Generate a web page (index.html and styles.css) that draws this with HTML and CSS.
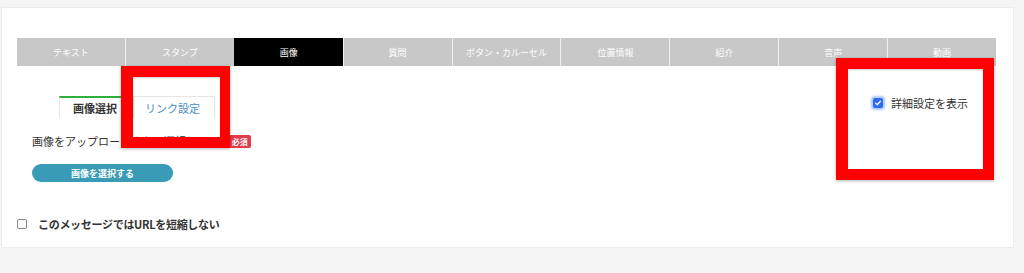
FILE: index.html
```html
<!DOCTYPE html>
<html lang="ja">
<head>
<meta charset="utf-8">
<link rel="stylesheet" href="styles.css">
</head>
<body>
<div class="card">
  <div class="tabs">
    <div class="tab">テキスト</div>
    <div class="tab">スタンプ</div>
    <div class="tab active">画像</div>
    <div class="tab">質問</div>
    <div class="tab">ボタン・カルーセル</div>
    <div class="tab">位置情報</div>
    <div class="tab">紹介</div>
    <div class="tab">音声</div>
    <div class="tab">動画</div>
  </div>
  <div class="panel">
    <div class="left">
      <div class="subtabs">
        <div class="subtab current">画像選択</div>
        <div class="subtab link">リンク設定</div>
      </div>
      <div class="field">
        <span class="label">画像をアップロードまたは選択して</span>
        <span class="badge">必須</span>
      </div>
      <button class="select-btn">画像を選択する</button>
    </div>
    <label class="detail">
      <span class="check on"><svg viewBox="0 0 10 10" width="8" height="8"><path d="M2 5.2 L4.1 7.2 L8 2.8" fill="none" stroke="#fff" stroke-width="1.6" stroke-linecap="round" stroke-linejoin="round"/></svg></span>
      <span>詳細設定を表示</span>
    </label>
  </div>
  <label class="footer">
    <span class="check off"></span>
    <span class="footer-text">このメッセージではURLを短縮しない</span>
  </label>
</div>
<div class="mark mark-a"></div>
<div class="mark mark-b"></div>
</body>
</html>
```

FILE: styles.css
```css
* { box-sizing: border-box; }
html, body { margin: 0; }
body {
  background: #f5f5f5;
  padding: 8px 0 0 2px;
  font-family: "Noto Sans CJK JP", "Noto Sans", sans-serif;
  color: #333;
  position: relative;
  height: 273px;
  overflow: hidden;
}
.card {
  width: 1011px;
  height: 239px;
  background: #fff;
  box-shadow: 0 0 0 1px #ececec;
  padding: 30px 17px 0 15px;
}
.tabs {
  display: flex;
  height: 28px;
  background: #c8c8c8;
}
.tab {
  flex: 1;
  display: flex;
  align-items: center;
  justify-content: center;
  color: #fff;
  font-size: 9px;
  border-left: 1px solid #f0f0f0;
}
.tab:first-child { border-left: none; }
.tab.active { background: #000; border-left-color: #000; }
.panel {
  display: flex;
  justify-content: space-between;
  align-items: flex-start;
}
.left { padding-left: 15px; }
.subtabs {
  display: flex;
  margin: 30px 0 0 27px;
  height: 22px;
}
.subtab {
  display: flex;
  align-items: center;
  font-size: 11px;
  height: 22px;
}
.subtab.current {
  font-weight: bold;
  color: #333;
  padding: 0 16px 0 13px;
  border-top: 2px solid #2fae3a;
  border-left: 1px solid #e8e8e8;
}
.subtab.link {
  color: #4b8dcc;
  padding: 0 14px 0 11px;
  border: 1px solid #e6e6e6;
  border-bottom: none;
}
.field {
  display: flex;
  align-items: center;
  margin-top: 16px;
  height: 14px;
}
.label { font-size: 11px; color: #333; }
.badge {
  margin-left: 21px;
  background: #e23c4b;
  color: #fff;
  font-size: 8px;
  font-weight: bold;
  width: 22px;
  text-align: center;
  height: 13px;
  line-height: 13px;
  border-radius: 2px;
}
.select-btn {
  display: block;
  margin-top: 16px;
  width: 141px;
  height: 18px;
  border: none;
  border-radius: 9px;
  background: #3a9bb7;
  color: #fff;
  font-family: inherit;
  font-size: 9px;
  font-weight: bold;
  padding: 0;
}
.detail {
  display: flex;
  align-items: center;
  margin: 30px 28px 0 0;
  height: 14px;
  font-size: 11px;
  color: #333;
  gap: 8px;
}
.check {
  width: 10px;
  height: 10px;
  border-radius: 2px;
  display: inline-flex;
  align-items: center;
  justify-content: center;
  flex: none;
}
.check.on {
  background: #2b6cf0;
  box-shadow: 0 0 2px 2px rgba(70, 130, 255, 0.45);
}
.check.off {
  width: 10px;
  height: 10px;
  border: 1px solid #8a8a8a;
  background: #fff;
}
.footer {
  display: flex;
  align-items: center;
  gap: 11px;
  margin-top: 35px;
  height: 14px;
}
.footer-text {
  font-size: 11px;
  font-weight: bold;
  color: #333;
  letter-spacing: -0.3px;
}
.mark {
  position: absolute;
  border: 11px solid #ff0000;
  box-shadow: 0 1px 3px rgba(0,0,0,0.3), inset 0 1px 2px rgba(0,0,0,0.2);
}
.mark-a {
  left: 121px;
  top: 66px;
  width: 109px;
  height: 82px;
  border-left-width: 12px;
  border-right-width: 10px;
}
.mark-b {
  left: 836px;
  top: 58px;
  width: 158px;
  height: 122px;
  border-left-width: 12px;
}
```
